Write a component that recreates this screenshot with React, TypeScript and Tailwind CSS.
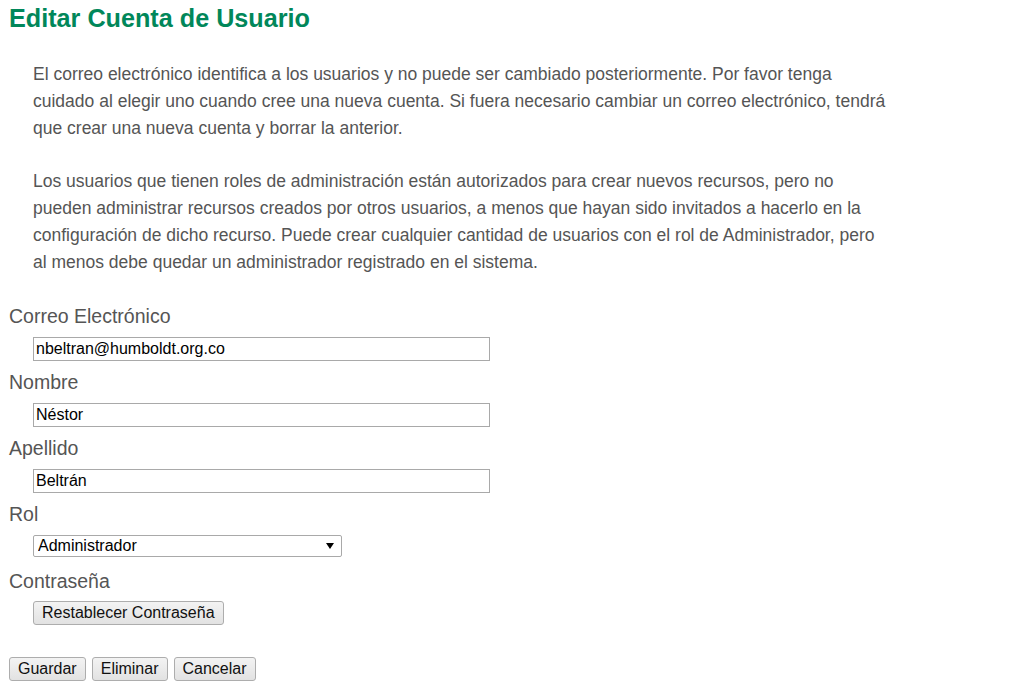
const labelClass = "mt-[9px] block h-[24px] text-[19.5px] leading-[24px] text-[#555]";

const inputClass =
  "mt-[9px] ml-[24px] block h-[24px] w-[457px] border border-[#a9a9a9] bg-white px-[2px] text-[16px] leading-[22px] text-black outline-none";

const buttonClass =
  "h-[24px] rounded-[3px] border border-[#adadad] bg-gradient-to-b from-[#f3f3f3] to-[#e2e2e2] px-[8px] text-[16px] leading-[22px] text-[#111]";

function Field({ label, value }: { label: string; value: string }) {
  return (
    <div>
      <label className={labelClass}>{label}</label>
      <input className={inputClass} defaultValue={value} />
    </div>
  );
}

export default function App() {
  return (
    <div className="min-h-[693px] bg-white px-[9px] font-['Liberation_Sans',Arial,sans-serif]">
      <h1 className="pt-[4px] text-[25.2px] font-bold leading-[28px] text-[#01875a]">
        Editar Cuenta de Usuario
      </h1>

      <div className="ml-[24px] mt-[29px] w-[855px] space-y-[26px] text-[17.5px] leading-[27px] text-[#555]">
        <p>
          El correo electrónico identifica a los usuarios y no puede ser cambiado posteriormente. Por favor tenga
          cuidado al elegir uno cuando cree una nueva cuenta. Si fuera necesario cambiar un correo electrónico, tendrá
          que crear una nueva cuenta y borrar la anterior.
        </p>
        <p>
          Los usuarios que tienen roles de administración están autorizados para crear nuevos recursos, pero no
          pueden administrar recursos creados por otros usuarios, a menos que hayan sido invitados a hacerlo en la
          configuración de dicho recurso. Puede crear cualquier cantidad de usuarios con el rol de Administrador, pero
          al menos debe quedar un administrador registrado en el sistema.
        </p>
      </div>

      <form className="mt-[28px]" onSubmit={(e) => e.preventDefault()}>
        <Field label="Correo Electrónico" value="nbeltran@humboldt.org.co" />
        <Field label="Nombre" value="Néstor" />
        <Field label="Apellido" value="Beltrán" />

        <div>
          <label className={labelClass}>Rol</label>
          <div className="relative mt-[9px] ml-[24px] w-[309px]">
            <select
              className="block h-[22px] w-full appearance-none rounded-[2px] border border-[#a9a9a9] bg-white pl-[4px] text-[16px] leading-[20px] text-black outline-none"
              defaultValue="admin"
            >
              <option value="admin">Administrador</option>
              <option value="user">Usuario</option>
            </select>
            <span className="pointer-events-none absolute right-[8px] top-[8px] h-0 w-0 border-x-[4px] border-t-[6px] border-x-transparent border-t-black" />
          </div>
        </div>

        <div>
          <label className="mt-[12px] block h-[24px] text-[19.5px] leading-[24px] text-[#555]">Contraseña</label>
          <div className="ml-[24px] mt-[8px]">
            <button type="button" className={buttonClass}>
              Restablecer Contraseña
            </button>
          </div>
        </div>

        <div className="mt-[32px] flex gap-[6px]">
          <button type="submit" className={buttonClass}>
            Guardar
          </button>
          <button type="button" className={buttonClass}>
            Eliminar
          </button>
          <button type="button" className={buttonClass}>
            Cancelar
          </button>
        </div>
      </form>
    </div>
  );
}
